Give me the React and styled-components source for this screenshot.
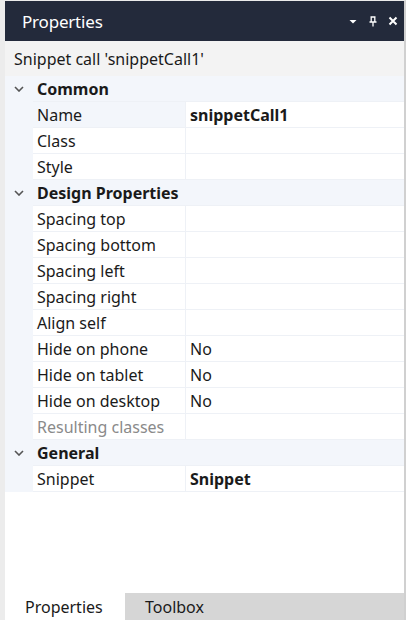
import React from "react";
import styled, { createGlobalStyle } from "styled-components";

const Global = createGlobalStyle`
  html, body {
    margin: 0;
    padding: 0;
    background: #ececec;
  }
  * {
    box-sizing: border-box;
  }
`;

const Frame = styled.div`
  width: 406px;
  height: 620px;
  display: flex;
  flex-direction: column;
  border-top: 1px solid #ebebeb;
  border-left: 5px solid #ececec;
  border-right: 2px solid #d0d0d0;
  font-family: "Noto Sans", "Open Sans", sans-serif;
  color: #1a1a1a;
  overflow: hidden;
`;

const Header = styled.div`
  height: 40px;
  flex: none;
  display: flex;
  align-items: center;
  justify-content: space-between;
  background: #232a3b;
  color: #ffffff;
  padding: 0 5px 0 17px;
`;

const Title = styled.div`
  font-size: 17px;
  letter-spacing: -0.2px;
`;

const Tools = styled.div`
  display: flex;
  align-items: center;
  gap: 8px;
`;

const ToolIcon = styled.svg`
  width: 12px;
  height: 12px;
  display: block;
`;

const Subtitle = styled.div`
  height: 35px;
  flex: none;
  display: flex;
  align-items: center;
  padding-left: 9px;
  background: #f3f3f3;
  font-size: 16px;
`;

const Grid = styled.div`
  flex: 1;
  background: #ffffff;
  display: grid;
  grid-template-columns: 28px 153px 1fr;
  grid-auto-rows: 26px;
  align-content: start;
`;

const Gutter = styled.div`
  background: #f3f6fb;
  display: flex;
  align-items: center;
  justify-content: center;
`;

const GroupTitle = styled.div`
  grid-column: 2 / 4;
  background: #f3f6fb;
  display: flex;
  align-items: center;
  padding-left: 4px;
  font-size: 16px;
  font-weight: 700;
  border-bottom: 1px solid #eef1f6;
`;

const Label = styled.div`
  background: ${(p) => (p.$selected ? "#f3f6fb" : "#ffffff")};
  color: ${(p) => (p.$muted ? "#8a8a8a" : "#1a1a1a")};
  display: flex;
  align-items: center;
  padding-left: 4px;
  font-size: 16px;
  border-bottom: 1px solid #eef1f6;
  border-right: 1px solid #eef1f6;
  white-space: nowrap;
  overflow: hidden;
`;

const Value = styled.div`
  display: flex;
  align-items: center;
  padding-left: 4px;
  font-size: 16px;
  font-weight: ${(p) => (p.$bold ? 700 : 400)};
  border-bottom: 1px solid #eef1f6;
`;

const TabBar = styled.div`
  height: 27px;
  flex: none;
  display: flex;
  background: #d6d6d6;
`;

const Tab = styled.div`
  width: ${(p) => p.$w}px;
  background: ${(p) => (p.$active ? "#ffffff" : "transparent")};
  display: flex;
  align-items: center;
  padding-left: 20px;
  font-size: 16px;
`;

const Chevron = () => (
  <svg width="10" height="6" viewBox="0 0 10 6">
    <path d="M1 1l4 4 4-4" fill="none" stroke="#555" strokeWidth="1.6" />
  </svg>
);

const groups = [
  {
    title: "Common",
    rows: [
      { label: "Name", value: "snippetCall1", bold: true, selected: true },
      { label: "Class" },
      { label: "Style" },
    ],
  },
  {
    title: "Design Properties",
    rows: [
      { label: "Spacing top" },
      { label: "Spacing bottom" },
      { label: "Spacing left" },
      { label: "Spacing right" },
      { label: "Align self" },
      { label: "Hide on phone", value: "No" },
      { label: "Hide on tablet", value: "No" },
      { label: "Hide on desktop", value: "No" },
      { label: "Resulting classes", muted: true },
    ],
  },
  {
    title: "General",
    rows: [{ label: "Snippet", value: "Snippet", bold: true }],
  },
];

export default function App() {
  return (
    <>
      <Global />
      <Frame>
        <Header>
          <Title>Properties</Title>
          <Tools>
            <ToolIcon viewBox="0 0 12 12">
              <path d="M2.5 5h7L6 8.5z" fill="#fff" />
            </ToolIcon>
            <ToolIcon viewBox="0 0 12 12">
              <path
                d="M3.5 2h5M4.2 2v5M7.8 2v5M2.5 7h7M6 7v4.5"
                fill="none"
                stroke="#fff"
                strokeWidth="1.3"
              />
            </ToolIcon>
            <ToolIcon viewBox="0 0 12 12">
              <path
                d="M2.5 2.5l7 7M9.5 2.5l-7 7"
                fill="none"
                stroke="#fff"
                strokeWidth="2"
              />
            </ToolIcon>
          </Tools>
        </Header>
        <Subtitle>Snippet call 'snippetCall1'</Subtitle>
        <Grid>
          {groups.map((g) => (
            <React.Fragment key={g.title}>
              <Gutter>
                <Chevron />
              </Gutter>
              <GroupTitle>{g.title}</GroupTitle>
              {g.rows.map((r) => (
                <React.Fragment key={r.label}>
                  <Gutter />
                  <Label $selected={r.selected} $muted={r.muted}>
                    {r.label}
                  </Label>
                  <Value $bold={r.bold}>{r.value}</Value>
                </React.Fragment>
              ))}
            </React.Fragment>
          ))}
        </Grid>
        <TabBar>
          <Tab $active $w={120}>Properties</Tab>
          <Tab $w={150}>Toolbox</Tab>
        </TabBar>
      </Frame>
    </>
  );
}
